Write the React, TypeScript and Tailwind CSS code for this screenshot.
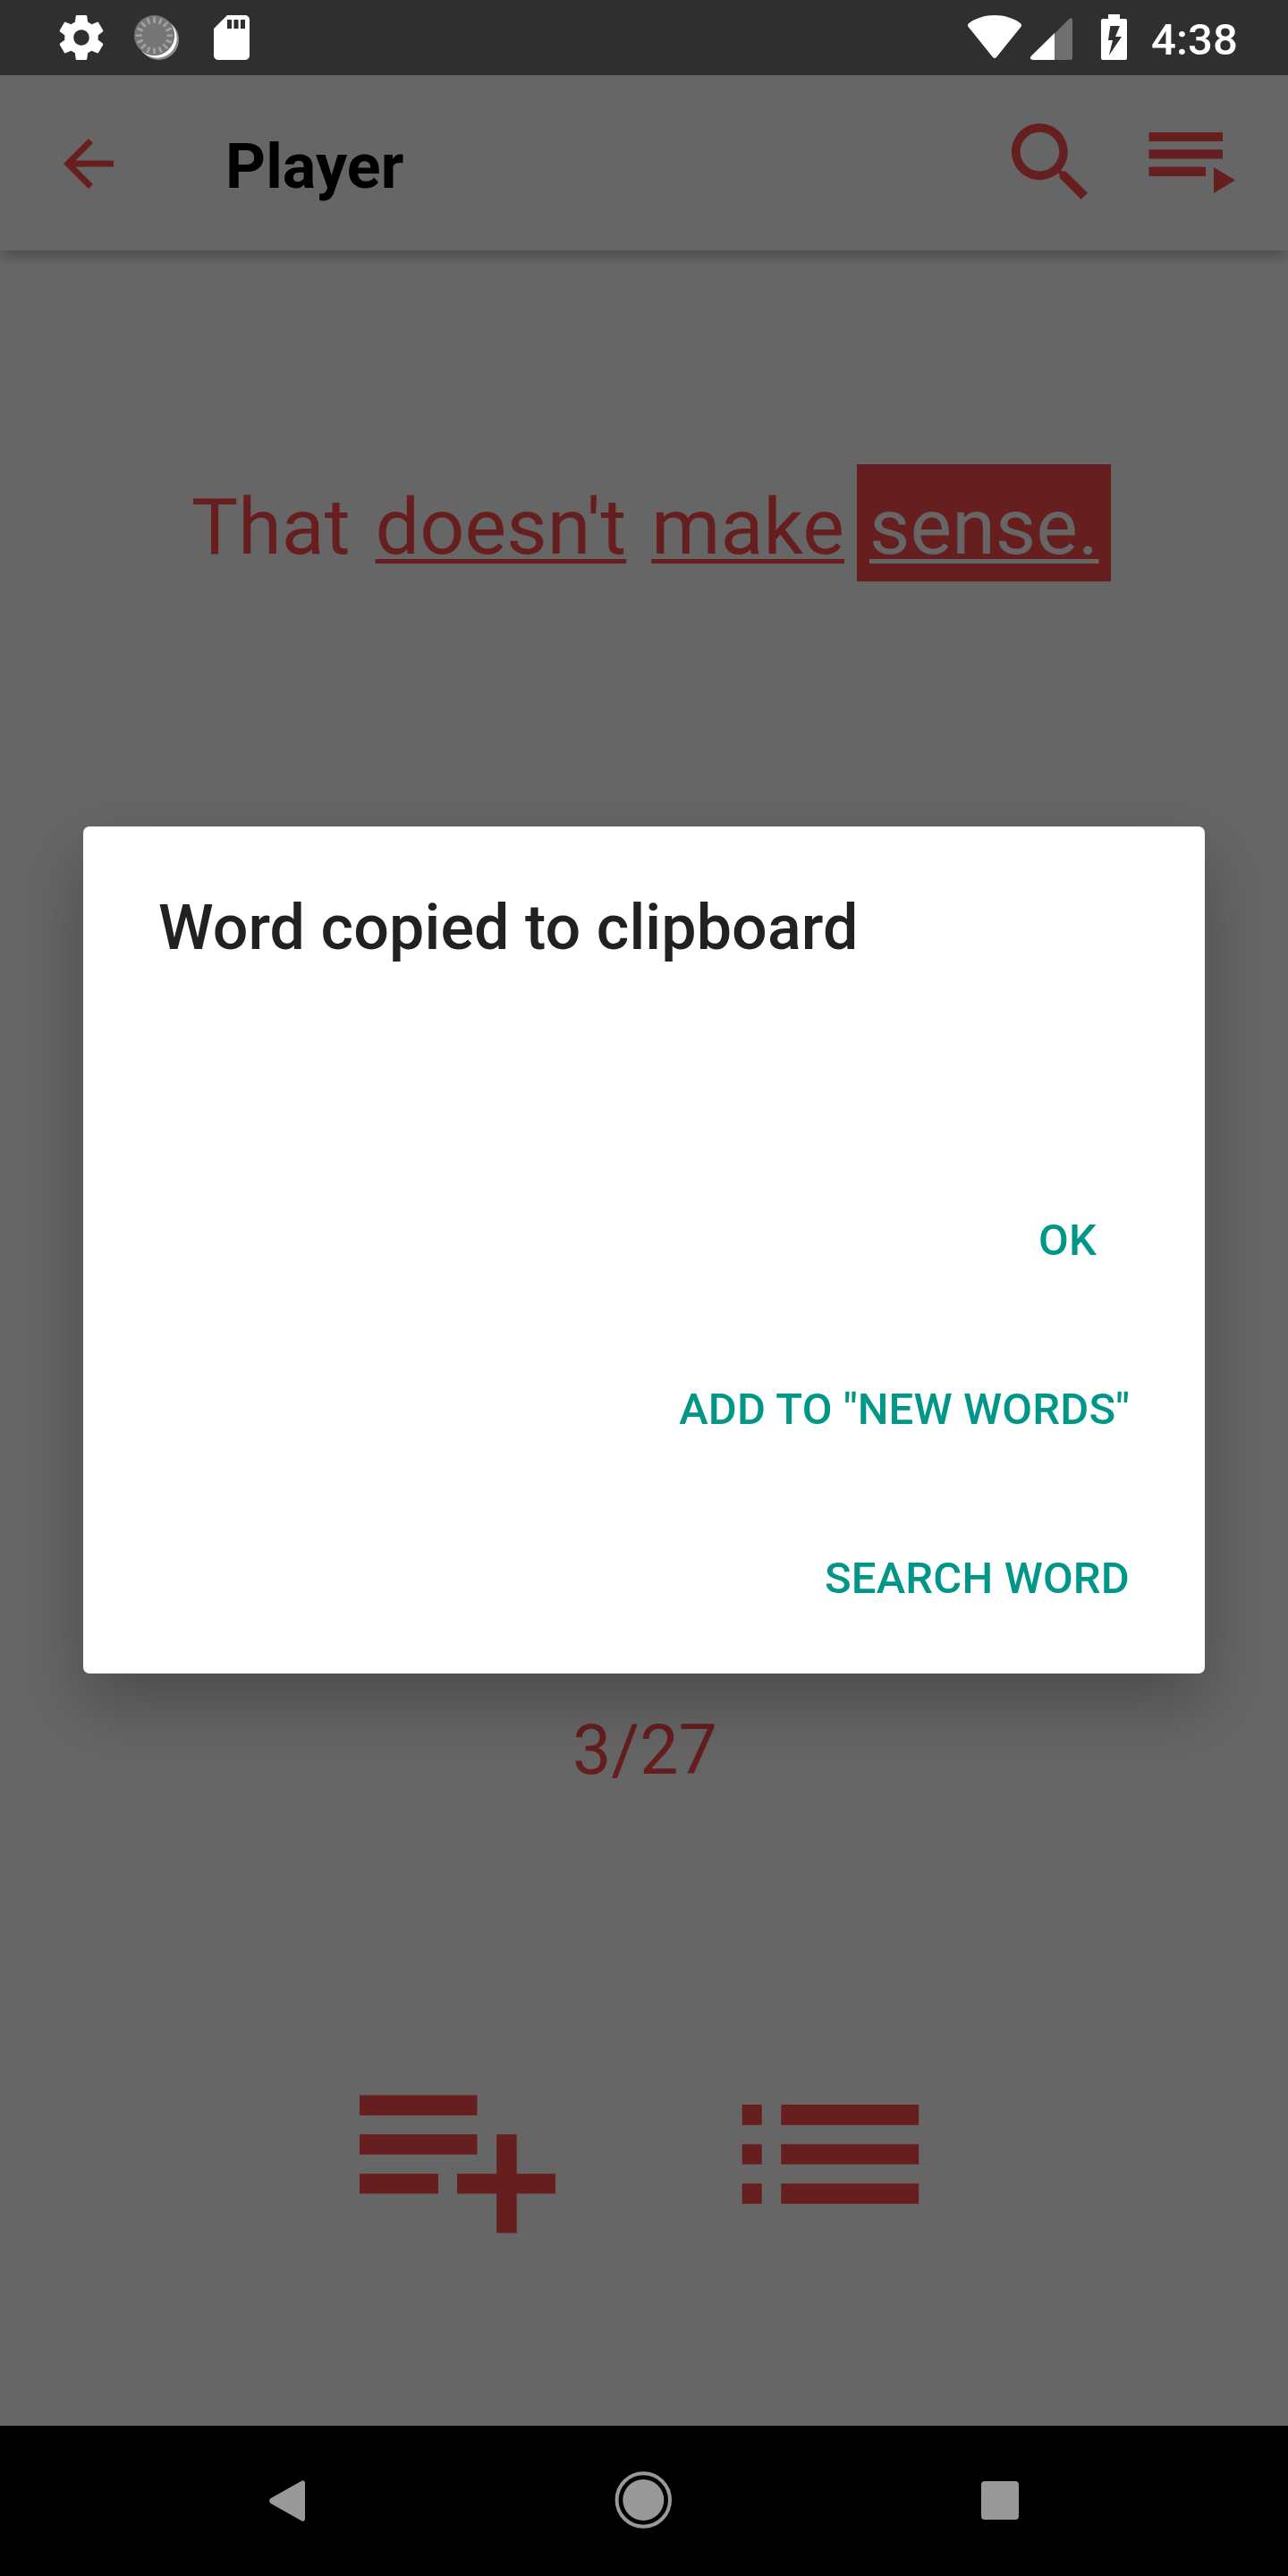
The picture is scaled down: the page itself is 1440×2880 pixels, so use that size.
const RED = '#661e1e'

const words = [
  { text: 'That', linked: false, active: false },
  { text: "doesn't", linked: true, active: false },
  { text: 'make', linked: true, active: false },
  { text: 'sense.', linked: true, active: true },
]

function wordClass(linked: boolean, active: boolean) {
  const base =
    'block h-[131px] px-[14px] pt-[9px] text-[88px] leading-[122px] tracking-[0.07px] whitespace-pre'
  const line = linked
    ? ' underline decoration-[5px] underline-offset-[6px] [text-decoration-skip-ink:none]'
    : ''
  const tone = active ? ' bg-[#661e1e] text-[#666666]' : ' text-[#661e1e]'
  return base + line + tone
}

function GearIcon() {
  return (
    <svg className="size-[60px]" viewBox="0 0 24 24" fill="#fff">
      <path d="M19.43 12.98c.04-.32.07-.64.07-.98s-.03-.66-.07-.98l2.11-1.65c.19-.15.24-.42.12-.64l-2-3.46c-.12-.22-.39-.3-.61-.22l-2.49 1c-.52-.4-1.08-.73-1.69-.98l-.38-2.65C14.46 2.18 14.25 2 14 2h-4c-.25 0-.46.18-.49.42l-.38 2.65c-.61.25-1.17.59-1.69.98l-2.49-1c-.23-.09-.49 0-.61.22l-2 3.46c-.13.22-.07.49.12.64l2.11 1.65c-.04.32-.07.65-.07.98s.03.66.07.98l-2.11 1.65c-.19.15-.24.42-.12.64l2 3.46c.12.22.39.3.61.22l2.49-1c.52.4 1.08.73 1.69.98l.38 2.65c.03.24.24.42.49.42h4c.25 0 .46-.18.49-.42l.38-2.65c.61-.25 1.17-.59 1.69-.98l2.49 1c.23.09.49 0 .61-.22l2-3.46c.12-.22.07-.49-.12-.64l-2.11-1.65zM12 15.5c-1.93 0-3.5-1.57-3.5-3.5s1.57-3.5 3.5-3.5 3.5 1.57 3.5 3.5-1.57 3.5-3.5 3.5z" />
    </svg>
  )
}

function SyncIcon() {
  const ticks = Array.from({ length: 16 }, (_, i) => i * 22.5)
  return (
    <svg className="h-[50px] w-[50px]" viewBox="0 0 50 50">
      <circle cx="27.3" cy="27.3" r="22.7" fill="#8a8a8a" />
      <circle cx="25.5" cy="25.5" r="22.3" fill="#fff" />
      <circle cx="22.6" cy="22.6" r="22.6" fill="#757575" />
      {ticks.map((a) => (
        <line
          key={a}
          x1="22.6"
          y1="3"
          x2="22.6"
          y2="7.6"
          stroke="#a0a0a0"
          strokeWidth="2.8"
          strokeLinecap="round"
          transform={`rotate(${a} 22.6 22.6)`}
        />
      ))}
    </svg>
  )
}

function SdIcon() {
  return (
    <svg className="size-[60px]" viewBox="0 0 24 24" fill="#fff">
      <path d="M18 2h-8L4.02 8 4 20c0 1.1.9 2 2 2h12c1.1 0 2-.9 2-2V4c0-1.1-.9-2-2-2zm-6 6h-2V4h2v4zm3 0h-2V4h2v4zm3 0h-2V4h2v4z" />
    </svg>
  )
}

function WifiIcon() {
  return (
    <svg className="h-[48px] w-[60px]" viewBox="0 0 60 48" fill="#fff">
      <path d="M30 0C19 0 8.800 3.300.9 9.200Q-.5 10.700.4 12.700L28 47Q30 49 32 47L59.600 12.700Q60.500 10.700 59.100 9.200C51.200 3.300 41 0 30 0z" />
    </svg>
  )
}

function SignalIcon() {
  return (
    <svg className="h-[47px] w-[47px]" viewBox="0 0 47 47">
      <path d="M27 17.500L43.500.9Q47-1 47 2.500V44.500Q47 47 44.500 47H27z" fill="#6f6f6f" />
      <path d="M27 17V47H2.500Q-1.500 46 .8 42.800z" fill="#fff" />
    </svg>
  )
}

function BatteryIcon() {
  return (
    <svg className="h-[51px] w-[29px]" viewBox="0 0 29 51">
      <path
        d="M8 0H21V5H27Q29 5 29 7V49Q29 51 27 51H2Q0 51 0 49V7Q0 5 2 5H8z"
        fill="#fff"
      />
      <path d="M10.300 13H21L16 25H23L8.800 46L13 29H8z" fill="#2f2f2f" />
    </svg>
  )
}

function StatusBar() {
  return (
    <header className="flex h-[84px] items-start justify-between bg-[#2f2f2f] pr-[56px] pl-[61px]">
      <div className="flex pt-[12px]">
        <GearIcon />
        <div className="mt-[5px] ml-[29px]">
          <SyncIcon />
        </div>
        <div className="ml-[29px]">
          <SdIcon />
        </div>
      </div>
      <div className="flex items-start">
        <div className="mt-[17px]">
          <WifiIcon />
        </div>
        <div className="mt-[20px] ml-[10px]">
          <SignalIcon />
        </div>
        <div className="mt-[16px] ml-[32px]">
          <BatteryIcon />
        </div>
        <span className="mt-[16px] ml-[27px] text-[49px] leading-[58px] font-medium tracking-[0.15px] text-white">
          4:38
        </span>
      </div>
    </header>
  )
}

function Toolbar() {
  return (
    <div className="relative flex h-[196px] items-start bg-[#666666] shadow-[0_8px_14px_-2px_rgba(0,0,0,0.26)]">
      <svg className="mt-[57px] ml-[57px] size-[84px]" viewBox="0 0 24 24" fill={RED}>
        <path d="M20 11H7.830l5.590-5.590L12 4l-8 8 8 8 1.410-1.410L7.830 13H20v-2z" />
      </svg>
      <h1 className="mt-[61px] ml-[111px] text-[70px] leading-[82px] font-bold tracking-[0.1px] text-black">
        Player
      </h1>
      <div className="ml-auto flex items-start pr-[59px]">
        <svg className="mt-[54px] h-[85px] w-[85px]" viewBox="64 64 384 384" fill={RED}>
          <path d="M337.509 305.372h-17.501l-6.571-5.486c20.791-25.181 33.922-57.054 33.922-93.257C347.358 127.632 283.896 64 205.135 64 127.452 64 64 127.632 64 206.629s63.452 142.628 142.225 142.628c35.011 0 67.831-13.167 92.991-34.008l6.561 5.487v17.551L415.180 448 448 415.172 337.509 305.372zm-131.284 0c-54.702 0-98.463-43.887-98.463-98.743 0-54.858 43.761-98.742 98.463-98.742 54.700 0 98.462 43.884 98.462 98.742 0 54.856-43.762 98.743-98.462 98.743z" />
        </svg>
        <svg className="mt-[64px] ml-[68px] h-[68px] w-[97px]" viewBox="0 0 97 68" fill={RED}>
          <path d="M.500 0H83V10H.500zM.500 19.300H83V29.500H.500zM.500 38.500H64V49H.500zM73 39L97 53.500 73 68z" />
        </svg>
      </div>
    </div>
  )
}

function Dialog() {
  return (
    <div className="absolute inset-x-0 top-[84px] bottom-[169px] flex items-center justify-center">
      <section className="flex h-[947px] w-[1254px] flex-col rounded-[7px] bg-white shadow-[0_34px_76px_rgba(0,0,0,0.26)]">
        <h2 className="mt-[72px] ml-[84px] text-[70px] leading-[82px] font-medium tracking-[0.08px] text-[#212121]">
          Word copied to clipboard
        </h2>
        <div className="mt-auto flex flex-col items-end pr-[84px] pb-[12px] text-[49px] leading-[189px] font-medium text-[#009688]">
          <button className="pr-[37px] tracking-[0.15px]">OK</button>
          <button className="tracking-[0.15px]">ADD TO "NEW WORDS"</button>
          <button className="tracking-[0.15px]">SEARCH WORD</button>
        </div>
      </section>
    </div>
  )
}

function NavBar() {
  return (
    <nav className="flex h-[168px] items-start bg-black">
      <svg className="mt-[61px] ml-[301px] h-[46px] w-[40px]" viewBox="0 0 40 46" fill="#999">
        <path d="M1.500 20.300L36 .8Q40-1 40 3V43Q40 47 36 45.200L1.500 25.700Q-1.300 23 1.500 20.300z" />
      </svg>
      <svg className="mt-[51px] ml-[346px] size-[64px]" viewBox="0 0 64 64">
        <circle cx="32.300" cy="32" r="29.700" fill="none" stroke="#999" strokeWidth="4" />
        <circle cx="32.300" cy="32" r="23" fill="#999" />
      </svg>
      <div className="mt-[62px] ml-[346px] h-[43px] w-[42px] rounded-[4px] bg-[#999]" />
    </nav>
  )
}

export default function App() {
  return (
    <div className="relative flex h-[2880px] w-[1440px] flex-col overflow-hidden bg-[#666666] font-['Roboto',sans-serif]">
      <StatusBar />
      <Toolbar />
      <main className="flex flex-1 flex-col">
        <div className="mt-[239px] flex justify-center pl-[2px]">
          {words.map((w) => (
            <span key={w.text} className={wordClass(w.linked, w.active)}>
              {w.text}
            </span>
          ))}
        </div>
        <p className="mt-[1262px] pl-[2px] text-center text-[77px] leading-[90px] tracking-[0.1px] text-[#661e1e]">
          3/27
        </p>
        <div className="mt-[340px] flex items-start pl-[402px]">
          <svg className="h-[155px] w-[220px]" viewBox="0 0 220 155" fill={RED}>
            <path d="M0 .4H131.500V23H0zM0 44.200H131.500V66.700H0zM0 88.200H88V110.500H0zM109 88.200H153.200V44.200H175.700V88.200H219V110.500H175.700V154.500H153.200V110.500H109z" />
          </svg>
          <svg className="mt-[11px] ml-[207px] h-[111px] w-[199px]" viewBox="0 0 199 111" fill={RED}>
            <path d="M.7 0H22.700V22.700H.7zM44.300 0H198.200V22.700H44.300zM.7 44.200H22.700V66.700H.7zM44.300 44.200H198.200V66.700H44.300zM.7 88.200H22.700V110.700H.7zM44.300 88.200H198.200V110.700H44.300z" />
          </svg>
        </div>
      </main>
      <NavBar />
      <Dialog />
    </div>
  )
}
